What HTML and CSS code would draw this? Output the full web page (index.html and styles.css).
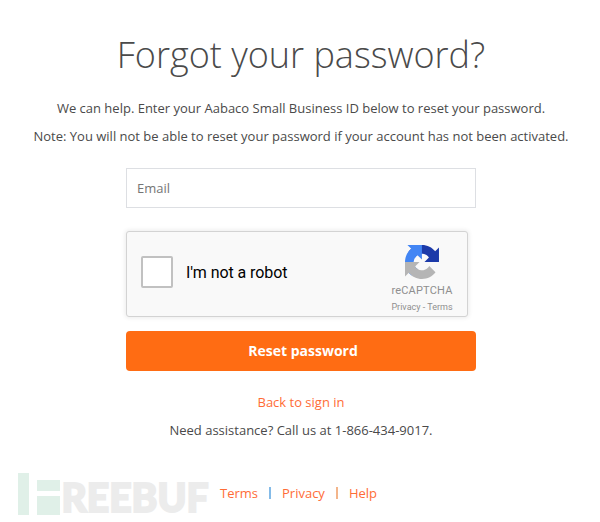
FILE: index.html
```html
<!DOCTYPE html>
<html lang="en">
<head>
    <meta charset="UTF-8">
    <meta name="viewport" content="width=device-width, initial-scale=1.0">
    <title>Forgot your password?</title>
    <link rel="stylesheet" href="styles.css">
</head>
<body>
    <main class="page">
        <h1>Forgot your password?</h1>
        <p>We can help. Enter your Aabaco Small Business ID below to reset your password.</p>
        <p>Note: You will not be able to reset your password if your account has not been activated.</p>

        <form class="reset-form">
            <input type="email" class="email" name="email" placeholder="Email">

            <div class="captcha">
                <span class="checkbox"></span>
                <span class="captcha-label">I'm not a robot</span>
                <div class="captcha-brand">
                    <svg class="captcha-logo" viewBox="0 0 64 64">
                        <path fill="#1c3aa9" d="M64 31.955l-.033-1.37V4.687l-7.16 7.16C50.948 4.674 42.033.093 32.05.093c-10.4 0-19.622 4.96-25.458 12.64l11.736 11.86a15.55 15.55 0 0 1 4.754-5.334c2.05-1.6 4.952-2.906 8.968-2.906.485 0 .86.057 1.135.163 4.976.393 9.288 3.14 11.828 7.124l-8.307 8.307L64 31.953"/>
                        <path fill="#4285f4" d="M31.862.094l-1.37.033H4.594l7.16 7.16C4.58 13.147 0 22.06 0 32.046c0 10.4 4.96 19.622 12.64 25.458L24.5 45.768a15.55 15.55 0 0 1-5.334-4.754c-1.6-2.05-2.906-4.952-2.906-8.968 0-.485.057-.86.163-1.135.393-4.976 3.14-9.288 7.124-11.828l8.307 8.307L31.86.095"/>
                        <path fill="#b5b5b5" d="M.001 32.045l.033 1.37v25.898l7.16-7.16c5.86 7.173 14.774 11.754 24.76 11.754 10.4 0 19.622-4.96 25.458-12.64l-11.736-11.86a15.55 15.55 0 0 1-4.754 5.334c-2.05 1.6-4.952 2.906-8.968 2.906-.485 0-.86-.057-1.135-.163-4.976-.393-9.288-3.14-11.828-7.124l8.307-8.307L.001 32.045"/>
                    </svg>
                    <span class="captcha-name">reCAPTCHA</span>
                    <span class="captcha-links">Privacy - Terms</span>
                </div>
            </div>

            <button type="submit">Reset password</button>
        </form>

        <p><a href="#">Back to sign in</a></p>
        <p>Need assistance? Call us at 1-866-434-9017.</p>

        <footer>
            <a href="#">Terms</a>
            <span class="bar blue"></span>
            <a href="#">Privacy</a>
            <span class="bar"></span>
            <a href="#">Help</a>
        </footer>
    </main>

    <!-- Watermark -->
    <svg class="watermark" viewBox="0 0 200 49">
        <rect class="mark" x="0" y="0" width="11" height="42"/>
        <rect class="mark" x="19" y="7" width="23" height="11"/>
        <rect class="mark" x="19" y="23" width="23" height="19"/>
        <text x="43.5" y="39" textLength="147" lengthAdjust="spacingAndGlyphs">REEBUF</text>
    </svg>
</body>
</html>
```
FILE: styles.css
```css
/* General Styles */
* {
    box-sizing: border-box;
}

body {
    font-family: 'Open Sans', sans-serif;
    font-size: 13px;
    line-height: 28px;
    color: #4a4a4a;
    background: #fff;
    text-align: center;
    margin: 0;
    height: 522px;
    position: relative;
}

.page {
    display: flex;
    flex-direction: column;
    align-items: center;
    width: 602px;
    padding-top: 29px;
}

h1 {
    font-size: 36px;
    font-weight: 300;
    line-height: 52px;
    margin: 0 0 13px;
}

p {
    margin: 0;
    white-space: nowrap;
}

a {
    color: #ff6c36;
    text-decoration: none;
}

/* Form */
.reset-form {
    display: flex;
    flex-direction: column;
    width: 350px;
    margin: 18px 0 17px;
}

.email {
    height: 40px;
    border: 1px solid #dddfe3;
    padding: 0 10px;
    font: inherit;
    margin-bottom: 23px;
}

.email::placeholder {
    color: #757575;
}

button {
    height: 40px;
    background: #ff6c13;
    border: none;
    border-radius: 4px;
    color: #fff;
    font: bold 14px 'Open Sans', sans-serif;
    padding: 0 0 2px 4px;
}

/* Captcha */
.captcha {
    display: flex;
    align-items: center;
    width: 342px;
    height: 86px;
    margin-bottom: 14px;
    padding-left: 14px;
    background: #f9f9f9;
    border: 1px solid #d3d3d3;
    border-radius: 3px;
    box-shadow: 0 0 4px 1px rgba(0, 0, 0, 0.08);
    font-family: Roboto, sans-serif;
}

.checkbox {
    width: 32px;
    height: 32px;
    margin-top: -5px;
    background: #fff;
    border: 2px solid #c1c1c1;
    border-radius: 2px;
}

.captcha-label {
    margin: -3px auto 0 13px;
    font-size: 16px;
    letter-spacing: -0.08px;
    color: #000;
}

.captcha-brand {
    display: flex;
    flex-direction: column;
    align-items: center;
    width: 90px;
    padding-top: 9px;
    color: #8f8f8f;
}

.captcha-logo {
    width: 34px;
    height: 34px;
}

.captcha-name {
    font-size: 11px;
    letter-spacing: 0.2px;
    line-height: 20px;
    margin-top: 2px;
}

.captcha-links {
    font-size: 9px;
    line-height: 12px;
}

/* Footer */
footer {
    display: flex;
    align-items: center;
    gap: 11px;
    margin: 35px 0 0 -5px;
}

.bar {
    width: 2px;
    height: 12px;
    background: #f3b58b;
}

.bar.blue {
    background: #84bbe8;
}

/* Watermark */
.watermark {
    position: absolute;
    left: 18px;
    top: 473px;
    width: 200px;
    height: 49px;
}

.mark {
    fill: #e0f0e8;
}

.watermark text {
    font-family: Lato, sans-serif;
    font-weight: 900;
    font-size: 40px;
    fill: #ececec;
    stroke: #ececec;
    stroke-width: 2px;
}
```
